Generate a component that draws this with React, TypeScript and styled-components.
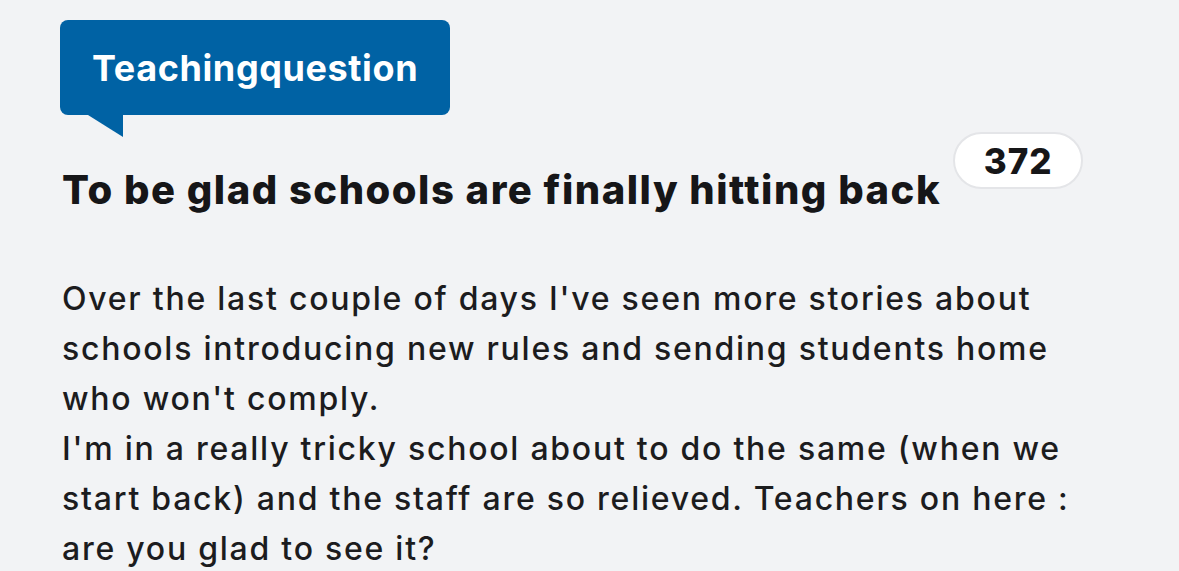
import React from 'react';
import styled, { createGlobalStyle } from 'styled-components';

const GlobalStyle = createGlobalStyle`
  html, body {
    margin: 0;
    padding: 0;
    background: #f2f3f5;
  }
  body {
    font-family: Inter, "Noto Sans", "Liberation Sans", sans-serif;
    color: #1c1c1e;
  }
`;

// ─── Styled components ────────────────────────────────────────────────────────

const Page = styled.div`
  width: 1179px;
  height: 571px;
  overflow: hidden;
  padding: 20px 0 0 60px;
  box-sizing: border-box;
`;

const Topic = styled.div`
  position: relative;
  display: inline-flex;
  align-items: center;
  height: 95px;
  padding: 0 32px;
  background: #0062a4;
  border-radius: 8px;
  color: #ffffff;
  font-size: 36px;
  font-weight: 700;
  letter-spacing: 0.6px;

  &::after {
    content: '';
    position: absolute;
    left: 28px;
    top: 95px;
    width: 35px;
    height: 22px;
    background: #0062a4;
    clip-path: polygon(0 0, 100% 0, 100% 100%);
  }
`;

const TitleRow = styled.div`
  display: flex;
  align-items: flex-start;
  gap: 12px;
  margin-top: 17px;
`;

const Title = styled.h1`
  margin: 34px 0 0 2px;
  font-size: 40px;
  font-weight: 800;
  line-height: 48px;
  letter-spacing: 1.5px;
  color: #161618;
  white-space: nowrap;
`;

const CountBadge = styled.span`
  display: inline-flex;
  align-items: center;
  justify-content: center;
  flex-shrink: 0;
  width: 130px;
  height: 57px;
  box-sizing: border-box;
  background: #ffffff;
  border: 2px solid #e4e5e8;
  border-radius: 29px;
  font-size: 35px;
  font-weight: 800;
  letter-spacing: 1px;
  color: #161618;
`;

const Body = styled.p`
  margin: 60px 0 0 2px;
  width: 1100px;
  font-size: 32px;
  font-weight: 500;
  line-height: 50px;
  letter-spacing: 1.75px;
  color: #1c1c1e;
  white-space: pre-line;
`;

// ─── Component ────────────────────────────────────────────────────────────────

const BODY_TEXT = `Over the last couple of days I've seen more stories about
schools introducing new rules and sending students home
who won't comply.
I'm in a really tricky school about to do the same (when we
start back) and the staff are so relieved. Teachers on here :
are you glad to see it?`;

export default function App() {
  return (
    <>
      <GlobalStyle />
      <Page>
        <Topic>Teachingquestion</Topic>
        <TitleRow>
          <Title>To be glad schools are finally hitting back</Title>
          <CountBadge>372</CountBadge>
        </TitleRow>
        <Body>{BODY_TEXT}</Body>
      </Page>
    </>
  );
}
